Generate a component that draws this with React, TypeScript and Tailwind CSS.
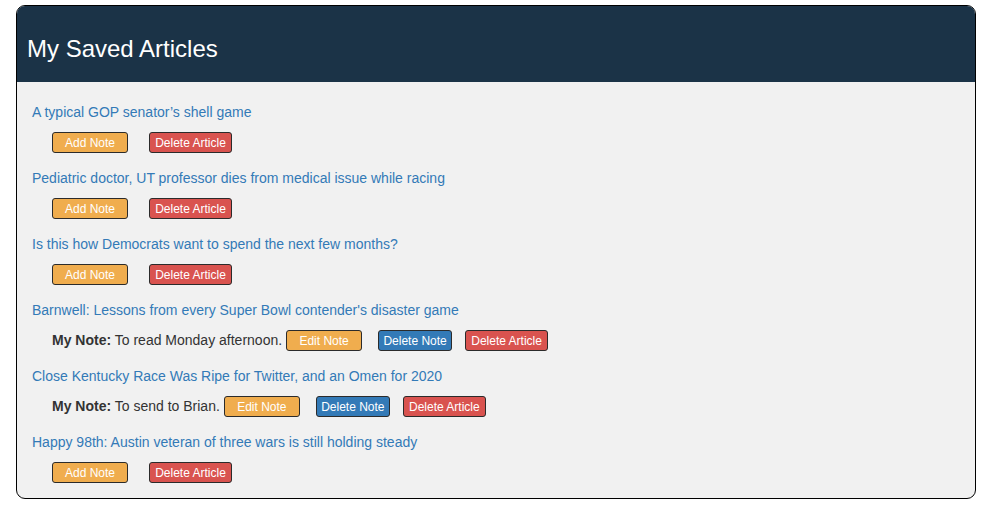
import React from "react";

type Article = { title: string; note?: string };

const articles: Article[] = [
  { title: "A typical GOP senator\u2019s shell game" },
  { title: "Pediatric doctor, UT professor dies from medical issue while racing" },
  { title: "Is this how Democrats want to spend the next few months?" },
  { title: "Barnwell: Lessons from every Super Bowl contender's disaster game", note: "To read Monday afternoon." },
  { title: "Close Kentucky Race Was Ripe for Twitter, and an Omen for 2020", note: "To send to Brian." },
  { title: "Happy 98th: Austin veteran of three wars is still holding steady" },
];

const btn =
  "h-[21px] flex items-center justify-center border border-[#2b2b2b] rounded-[3px] text-[12px] leading-none text-white";

export default function App() {
  return (
    <div className="w-[994px] h-[513px] bg-white" style={{ fontFamily: "'Liberation Sans', Arial, sans-serif" }}>
      <div className="ml-[16px] mt-[5px] w-[960px] border border-black rounded-[9px] overflow-hidden bg-[#f1f1f1]">
        <div className="bg-[#1b3347] px-[10px] pt-[30px] pb-[20px]">
          <h3 className="text-[24px] leading-[26px] text-white">My Saved Articles</h3>
        </div>
        <div className="pt-[20px] pl-[15px]">
          {articles.map((a, i) => (
            <div key={i} className="pb-[15px]">
              <div className="h-[20px] leading-[20px] text-[14px] text-[#337ab7]">{a.title}</div>
              <div className="mt-[10px] ml-[20px] flex items-center h-[21px]">
                {a.note ? (
                  <>
                    <span className="text-[14px] text-[#333] mr-[4px] whitespace-nowrap">
                      <b>My Note:</b> {a.note}
                    </span>
                    <button className={`${btn} bg-[#f0ad4e] w-[76px]`}>Edit Note</button>
                    <button className={`${btn} bg-[#337ab7] w-[74px] ml-[16px]`}>Delete Note</button>
                    <button className={`${btn} bg-[#d9534f] w-[83px] ml-[13px]`}>Delete Article</button>
                  </>
                ) : (
                  <>
                    <button className={`${btn} bg-[#f0ad4e] w-[76px]`}>Add Note</button>
                    <button className={`${btn} bg-[#d9534f] w-[83px] ml-[21px]`}>Delete Article</button>
                  </>
                )}
              </div>
            </div>
          ))}
        </div>
      </div>
    </div>
  );
}
